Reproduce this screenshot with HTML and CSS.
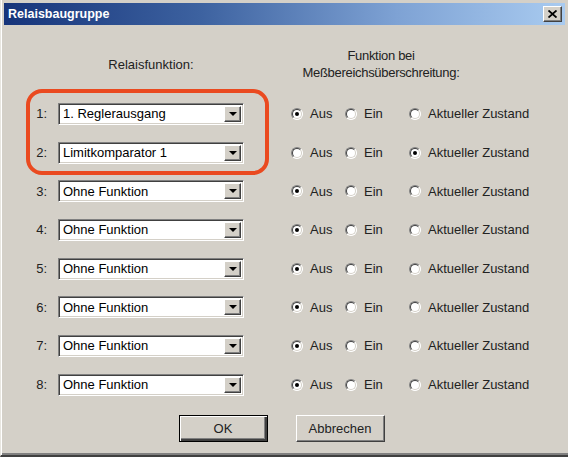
FILE: index.html
```html
<!DOCTYPE html>
<html lang="de">
<head>
    <meta charset="UTF-8">
    <title>Relaisbaugruppe</title>
    <link rel="stylesheet" href="styles.css">
</head>
<body>
    <div class="window">
        <div class="titlebar">
            <span class="title">Relaisbaugruppe</span>
            <span class="close">
                <svg width="9" height="8" viewBox="0 0 9 8"><path d="M0.5 0.5 L8.5 7.5 M8.5 0.5 L0.5 7.5" stroke="#000" stroke-width="1.8"/></svg>
            </span>
        </div>

        <div class="content">
            <div class="header">
                <div class="head-left">Relaisfunktion:</div>
                <div class="head-right">Funktion bei<br>Meßbereichsüberschreitung:</div>
            </div>

            <div class="rows">
                <div class="row">
                    <span class="num">1:</span>
                    <div class="combo"><span class="combo-text">1. Reglerausgang</span><span class="drop"></span></div>
                    <div class="options">
                        <label class="opt opt-aus"><span class="radio checked"></span>Aus</label>
                        <label class="opt opt-ein"><span class="radio"></span>Ein</label>
                        <label class="opt"><span class="radio"></span>Aktueller Zustand</label>
                    </div>
                </div>
                <div class="row">
                    <span class="num">2:</span>
                    <div class="combo"><span class="combo-text">Limitkomparator 1</span><span class="drop"></span></div>
                    <div class="options">
                        <label class="opt opt-aus"><span class="radio"></span>Aus</label>
                        <label class="opt opt-ein"><span class="radio"></span>Ein</label>
                        <label class="opt"><span class="radio checked"></span>Aktueller Zustand</label>
                    </div>
                </div>
                <div class="row">
                    <span class="num">3:</span>
                    <div class="combo"><span class="combo-text">Ohne Funktion</span><span class="drop"></span></div>
                    <div class="options">
                        <label class="opt opt-aus"><span class="radio checked"></span>Aus</label>
                        <label class="opt opt-ein"><span class="radio"></span>Ein</label>
                        <label class="opt"><span class="radio"></span>Aktueller Zustand</label>
                    </div>
                </div>
                <div class="row">
                    <span class="num">4:</span>
                    <div class="combo"><span class="combo-text">Ohne Funktion</span><span class="drop"></span></div>
                    <div class="options">
                        <label class="opt opt-aus"><span class="radio checked"></span>Aus</label>
                        <label class="opt opt-ein"><span class="radio"></span>Ein</label>
                        <label class="opt"><span class="radio"></span>Aktueller Zustand</label>
                    </div>
                </div>
                <div class="row">
                    <span class="num">5:</span>
                    <div class="combo"><span class="combo-text">Ohne Funktion</span><span class="drop"></span></div>
                    <div class="options">
                        <label class="opt opt-aus"><span class="radio checked"></span>Aus</label>
                        <label class="opt opt-ein"><span class="radio"></span>Ein</label>
                        <label class="opt"><span class="radio"></span>Aktueller Zustand</label>
                    </div>
                </div>
                <div class="row">
                    <span class="num">6:</span>
                    <div class="combo"><span class="combo-text">Ohne Funktion</span><span class="drop"></span></div>
                    <div class="options">
                        <label class="opt opt-aus"><span class="radio checked"></span>Aus</label>
                        <label class="opt opt-ein"><span class="radio"></span>Ein</label>
                        <label class="opt"><span class="radio"></span>Aktueller Zustand</label>
                    </div>
                </div>
                <div class="row">
                    <span class="num">7:</span>
                    <div class="combo"><span class="combo-text">Ohne Funktion</span><span class="drop"></span></div>
                    <div class="options">
                        <label class="opt opt-aus"><span class="radio checked"></span>Aus</label>
                        <label class="opt opt-ein"><span class="radio"></span>Ein</label>
                        <label class="opt"><span class="radio"></span>Aktueller Zustand</label>
                    </div>
                </div>
                <div class="row">
                    <span class="num">8:</span>
                    <div class="combo"><span class="combo-text">Ohne Funktion</span><span class="drop"></span></div>
                    <div class="options">
                        <label class="opt opt-aus"><span class="radio checked"></span>Aus</label>
                        <label class="opt opt-ein"><span class="radio"></span>Ein</label>
                        <label class="opt"><span class="radio"></span>Aktueller Zustand</label>
                    </div>
                </div>
            </div>

            <div class="buttons">
                <button class="btn btn-default">OK</button>
                <button class="btn">Abbrechen</button>
            </div>
        </div>

        <!-- Markierung um Relais 1 und 2 -->
        <div class="highlight"></div>
    </div>
</body>
</html>
```

FILE: styles.css
```css
body {
    margin: 0;
    background-color: #d4d0c8;
    font-family: 'Liberation Sans', Arial, sans-serif;
    font-size: 13px;
    color: #000;
}

.window {
    position: relative;
    width: 568px;
    height: 457px;
    box-sizing: border-box;
    padding: 3px 3px 0 3px;
    background-color: #d4d0c8;
    border-left: 1px solid #e8e6e0;
    border-bottom: 2px solid #404040;
    box-shadow: inset 1px 0 #ffffff, inset 0 -2px #808080;
}

.titlebar {
    height: 22px;
    display: flex;
    align-items: center;
    justify-content: space-between;
    padding: 0 3px 0 4px;
    background: linear-gradient(90deg, #16347a 0%, #3d62a0 35%, #7ea2d4 70%, #a9cbf0 100%);
}

.title {
    color: #fff;
    font-weight: bold;
    font-size: 12.5px;
}

.close {
    width: 19px;
    height: 16px;
    box-sizing: border-box;
    display: flex;
    align-items: center;
    justify-content: center;
    background-color: #d4d0c8;
    border: 1px solid;
    border-color: #ffffff #404040 #404040 #ffffff;
    box-shadow: inset -1px -1px #808080;
}

.content {
    padding-top: 22px;
}

.header {
    display: flex;
    align-items: center;
    height: 34px;
    line-height: 17px;
    color: #222;
}

.head-left {
    width: 186px;
    margin-left: 54px;
    text-align: center;
}

.head-right {
    width: 180px;
    margin-left: 47px;
    text-align: center;
    letter-spacing: -0.3px;
}

.rows {
    margin-top: 13.5px;
}

.row {
    height: 38.7px;
    display: flex;
    align-items: center;
}

.num {
    width: 43px;
    margin-right: 11px;
    text-align: right;
    color: #222;
}

.combo {
    position: relative;
    width: 186px;
    height: 22px;
    box-sizing: border-box;
    display: flex;
    align-items: center;
    background: #fff;
    border: 1px solid;
    border-color: #808080 #ffffff #ffffff #808080;
    box-shadow: inset 1px 1px #404040, inset -1px -1px #d4d0c8;
}

.combo-text {
    padding-left: 4px;
}

.drop {
    position: absolute;
    top: 2px;
    right: 2px;
    width: 17px;
    height: 16px;
    box-sizing: border-box;
    background-color: #d4d0c8;
    border: 1px solid;
    border-color: #ffffff #404040 #404040 #ffffff;
    box-shadow: inset -1px -1px #808080;
}

.drop::after {
    content: '';
    position: absolute;
    left: 4px;
    top: 5px;
    border-left: 4px solid transparent;
    border-right: 4px solid transparent;
    border-top: 4px solid #000;
}

.options {
    display: flex;
    align-items: center;
    margin-left: 47px;
    color: #222;
}

.opt {
    display: flex;
    align-items: center;
    gap: 7px;
}

.opt-aus {
    width: 54px;
}

.opt-ein {
    width: 64px;
}

.radio {
    position: relative;
    width: 12px;
    height: 12px;
    box-sizing: border-box;
    border-radius: 50%;
    border: 1px solid;
    border-color: #808080 #ffffff #ffffff #808080;
    background: #fff;
}

.radio::before {
    content: '';
    position: absolute;
    inset: 0;
    border-radius: 50%;
    border: 1px solid;
    border-color: #404040 #d4d0c8 #d4d0c8 #404040;
}

.radio.checked::after {
    content: '';
    position: absolute;
    left: 3px;
    top: 3px;
    width: 4px;
    height: 4px;
    border-radius: 50%;
    background: #000;
}

.buttons {
    display: flex;
    justify-content: center;
    gap: 28px;
    margin-top: 11px;
    padding-right: 6px;
}

.btn {
    width: 89px;
    height: 27px;
    box-sizing: border-box;
    padding: 0;
    font-family: 'Liberation Sans', Arial, sans-serif;
    font-size: 13px;
    color: #222;
    background-color: #d4d0c8;
    border: 1px solid;
    border-color: #ffffff #404040 #404040 #ffffff;
    box-shadow: inset -1px -1px #808080;
}

.btn-default {
    border: 1px solid #000;
    box-shadow: inset 1px 1px #ffffff, inset -2px -2px #404040, inset -3px -3px #808080;
}

.highlight {
    position: absolute;
    left: 25px;
    top: 89px;
    width: 243px;
    height: 86px;
    box-sizing: border-box;
    border: 4px solid #ea4a20;
    border-radius: 16px;
}
```
